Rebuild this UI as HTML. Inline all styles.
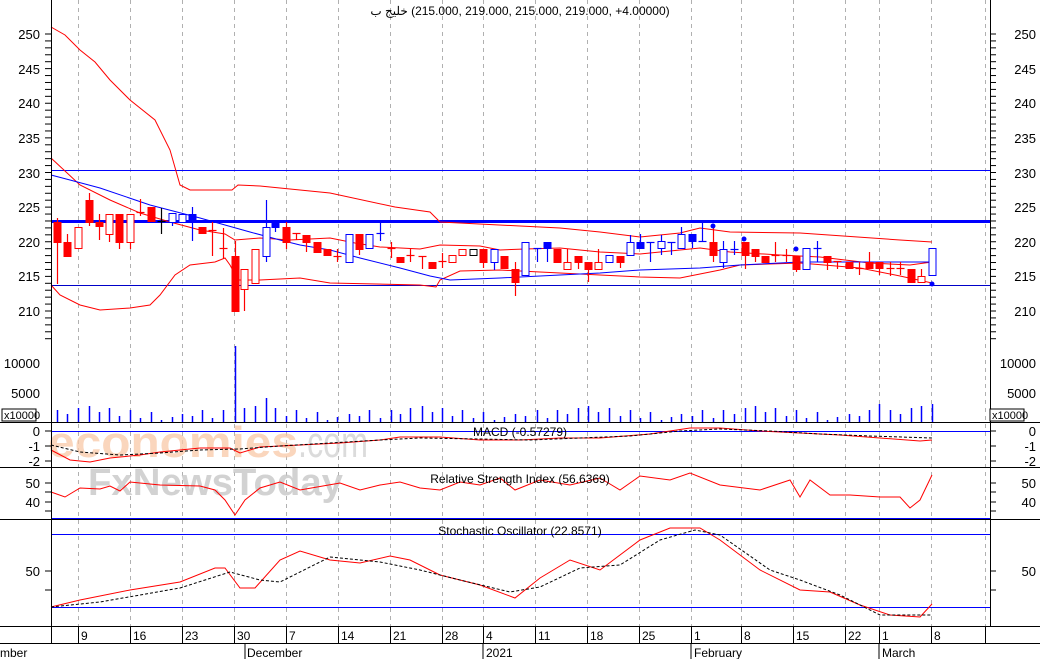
<!DOCTYPE html>
<html><head><meta charset="utf-8"><style>
html,body{margin:0;padding:0;background:#fff;}
svg{display:block;font-family:"Liberation Sans","Noto Sans CJK SC",sans-serif;}
</style></head><body>
<svg id="c" width="1040" height="659" viewBox="0 0 1040 659" xmlns="http://www.w3.org/2000/svg">
<rect width="1040" height="659" fill="#fff"/>
<g id="grid" stroke="#b0b0b0" stroke-dasharray="4,4" stroke-width="1"></g>
<text x="48" y="457" font-size="44" fill="#f9c9a8" opacity="0.75" font-weight="bold" textLength="250" lengthAdjust="spacingAndGlyphs">economies</text>
<text x="298" y="457" font-size="44" fill="#d0d0d0" opacity="0.75" textLength="70" lengthAdjust="spacingAndGlyphs">.com</text>
<text x="88" y="495" font-size="38" fill="#c8c8c8" opacity="0.8" font-weight="bold" textLength="255" lengthAdjust="spacingAndGlyphs">FxNewsToday</text>
<line x1="51" y1="170.5" x2="990" y2="170.5" stroke="#0000ff" stroke-width="1"/>
<line x1="51" y1="221.5" x2="990" y2="221.5" stroke="#0000ff" stroke-width="3"/>
<line x1="51" y1="285.5" x2="990" y2="285.5" stroke="#0000c8" stroke-width="1"/>
<g fill="none" stroke-width="1">
<polyline stroke="#f00" points="51,27 65,35 80,50 95,62 110,80 130,100 155,120 170,150 180,185 190,190 232,190 238,185 260,186 330,193 395,207 430,212 440,222 520,226 560,228 600,232 640,237 680,233 700,228 730,232 800,233 900,240 932,242"/>
<polyline stroke="#f00" points="51,158 80,185 110,200 140,213 170,222 200,230 225,234 235,240 260,238 290,240 330,238 355,243 380,247 420,249 440,245 480,246 500,250 525,249 560,248 600,252 640,254 700,248 730,252 780,255 820,257 870,263 910,265 932,262"/>
<polyline stroke="#f00" points="51,285 60,295 80,305 100,310 130,308 150,305 160,295 175,275 190,265 215,262 225,258 230,265 238,280 260,280 300,278 330,283 420,285 436,287 440,280 460,271 500,270 540,272 600,275 640,277 680,278 700,274 720,270 740,265 800,263 860,268 900,276 932,283"/>
<polyline stroke="#00f" points="51,175 70,180 100,188 150,205 200,218 250,232 280,240 300,245 330,250 360,258 400,268 430,276 450,280 500,278 560,275 600,273 640,270 700,268 740,265 800,262 870,262 932,262"/>
</g>
<g id="cand"></g>
<g fill="#00f"><circle cx="713" cy="226" r="2.5"/><circle cx="744" cy="239" r="2.5"/><circle cx="796" cy="249" r="2.5"/><circle cx="932" cy="284" r="2.5"/></g>
<g id="vol" stroke="#00f" stroke-width="1.5"></g>
<line x1="51" y1="431.5" x2="990" y2="431.5" stroke="#00f"/>
<polyline fill="none" stroke="#f00" points="51,450 70,460 90,462 110,458 140,455 160,452 200,448 230,448 240,453 260,447 300,445 340,443 380,440 400,437 440,437 480,440 520,440 560,438 600,438 650,434 690,428 720,428 760,431 800,433 840,435 880,438 920,441 932,440"/>
<polyline fill="none" stroke="#000" stroke-dasharray="3,2" points="51,445 80,452 120,455 160,453 200,450 240,449 280,446 330,443 380,440 420,438 480,439 530,440 580,438 630,436 680,431 720,429 770,431 820,434 870,436 932,438"/>
<polyline fill="none" stroke="#f00" points="51,492 65,497 80,488 100,489 110,486 120,491 130,482 160,485 200,486 215,490 225,500 235,515 245,500 260,488 280,482 300,490 340,483 360,490 380,485 400,482 420,488 440,490 460,482 480,485 500,478 515,490 540,480 570,485 600,478 620,490 640,476 670,480 690,473 720,485 760,490 790,480 800,497 810,480 830,495 850,495 880,497 900,497 910,508 920,500 932,475"/>
<line x1="51" y1="518.5" x2="990" y2="518.5" stroke="#00f"/>
<line x1="51" y1="534.5" x2="990" y2="534.5" stroke="#00f"/>
<line x1="51" y1="607.5" x2="990" y2="607.5" stroke="#00f"/>
<polyline fill="none" stroke="#f00" points="51,607 80,600 130,590 180,582 215,568 225,568 240,588 255,588 280,560 300,551 330,560 360,563 390,556 410,560 440,575 480,585 515,598 540,578 570,560 600,570 640,540 670,528 700,528 720,540 760,570 800,590 830,592 860,605 890,615 920,617 932,604"/>
<polyline fill="none" stroke="#000" stroke-dasharray="3,2" points="51,607 100,602 180,588 230,572 260,580 280,582 330,557 380,562 420,570 460,580 510,592 540,587 580,568 620,565 660,540 695,530 720,535 770,570 800,580 840,595 880,615 932,615"/>
<g stroke="#000" stroke-width="1">
<line x1="51.5" y1="0" x2="51.5" y2="643"/>
<line x1="990.5" y1="0" x2="990.5" y2="626"/>
<line x1="0" y1="422.5" x2="1040" y2="422.5"/>
<line x1="0" y1="467.5" x2="1040" y2="467.5"/>
<line x1="0" y1="519.5" x2="1040" y2="519.5"/>
<line x1="0" y1="626.5" x2="1040" y2="626.5"/>
<line x1="0" y1="643.5" x2="1040" y2="643.5"/>
</g>
<g id="ticks" stroke="#000"></g>
<g font-size="13" fill="#000">
<text x="520" y="15" font-size="12" text-anchor="middle" direction="ltr" style="direction:ltr;unicode-bidi:embed">&#x200E;<tspan>خليج ب</tspan>&#x200E; (215.000, 219.000, 215.000, 219.000, +4.00000)</text>
<g text-anchor="end">
<text x="40" y="39">250</text><text x="40" y="74">245</text><text x="40" y="108">240</text><text x="40" y="143">235</text><text x="40" y="178">230</text><text x="40" y="212">225</text><text x="40" y="247">220</text><text x="40" y="281">215</text><text x="40" y="316">210</text>
<text x="40" y="368">10000</text><text x="40" y="398">5000</text>
<text x="40" y="436">0</text><text x="40" y="451">-1</text><text x="40" y="466">-2</text>
<text x="40" y="488">50</text><text x="40" y="507">40</text><text x="40" y="576">50</text>
<text x="1036" y="39">250</text><text x="1036" y="74">245</text><text x="1036" y="108">240</text><text x="1036" y="143">235</text><text x="1036" y="178">230</text><text x="1036" y="212">225</text><text x="1036" y="247">220</text><text x="1036" y="281">215</text><text x="1036" y="316">210</text>
<text x="1036" y="368">10000</text><text x="1036" y="398">5000</text>
<text x="1036" y="436">0</text><text x="1036" y="451">-1</text><text x="1036" y="466">-2</text>
<text x="1036" y="488">50</text><text x="1036" y="507">40</text><text x="1036" y="576">50</text>
</g>
<text x="520" y="436" text-anchor="middle" font-size="12">MACD (-0.57279)</text>
<text x="520" y="483" text-anchor="middle" font-size="12">Relative Strength Index (56.6369)</text>
<text x="520" y="535" text-anchor="middle" font-size="12">Stochastic Oscillator (22.8571)</text>
<rect x="2" y="409" width="34" height="12" fill="#fff" stroke="#000"/>
<text x="4" y="419" font-size="11">x10000</text>
<rect x="990" y="409" width="34" height="12" fill="#fff" stroke="#000"/>
<text x="992" y="419" font-size="11">x10000</text>
<g id="dl"></g>
<text x="0" y="657" font-size="12">mber</text>
<text x="247" y="657" font-size="12">December</text>
<text x="486" y="657" font-size="12">2021</text>
<text x="694" y="657" font-size="12">February</text>
<text x="882" y="657" font-size="12">March</text>
</g>
<g stroke="#000"><line x1="245" y1="643" x2="245" y2="659"/><line x1="483" y1="643" x2="483" y2="659"/><line x1="691" y1="643" x2="691" y2="659"/><line x1="879" y1="643" x2="879" y2="659"/></g>
</svg>
<script>
var NS="http://www.w3.org/2000/svg";
function el(p,t,a){var e=document.createElementNS(NS,t);for(var k in a)e.setAttribute(k,a[k]);p.appendChild(e);return e;}
var wk=[[78,"9"],[130,"16"],[182,"23"],[234,"30"],[286,"7"],[338,"14"],[390,"21"],[442,"28"],[483,"4"],[535,"11"],[587,"18"],[639,"25"],[691,"1"],[741,"8"],[793,"15"],[845,"22"],[879,"1"],[931,"8"],[985,""]];
var g=document.getElementById("grid"),dl=document.getElementById("dl"),tk=document.getElementById("ticks");
wk.forEach(function(w){el(g,"line",{x1:w[0]+.5,y1:0,x2:w[0]+.5,y2:626});
el(tk,"line",{x1:w[0]+.5,y1:626,x2:w[0]+.5,y2:643});
var t=el(dl,"text",{x:w[0]+3,y:640,"font-size":"12"});t.textContent=w[1];});
for(var y=34;y<=345;y+=6.925){el(tk,"line",{x1:45,y1:y,x2:51,y2:y});el(tk,"line",{x1:990,y1:y,x2:996,y2:y});}
[431,446,461,483,492,502,511,571,590].forEach(function(y){el(tk,"line",{x1:45,y1:y,x2:51,y2:y});el(tk,"line",{x1:990,y1:y,x2:996,y2:y});});
var R="#f00",B="#00f",K="#000";
var C=[[57,222,242,218,284,R,1],[67,242,256,234,256,R,1],[78,227,248,227,248,R,0],[89,200,222,193,226,R,1],[99,222,226,214,240,R,1],[109,214,234,214,242,R,0],[119,214,242,214,249,R,1],[130,214,242,214,249,R,0],[140,212,212,199,216,R,0],[151,207,221,207,221,R,1],[161,221,221,208,234,K,0],[172,213,222,213,226,B,0],[182,214,222,214,222,B,0],[192,214,222,207,241,B,1],[202,227,233,227,233,R,1],[212,230,230,222,256,R,0],[223,248,248,228,259,R,0],[235,256,311,241,311,R,1],[244,269,289,269,311,R,0],[255,249,283,249,283,R,0],[266,227,256,200,262,B,0],[275,222,227,222,232,B,1],[286,227,242,222,249,R,1],[296,233,233,233,240,R,0],[306,235,242,235,252,R,1],[317,242,252,242,252,R,1],[327,249,255,249,256,R,1],[337,256,256,249,262,R,0],
[349,234,262,234,262,B,0],[359,234,249,234,255,R,1],[369,234,248,234,248,B,0],[380,233,233,223,241,B,0],[391,248,248,242,258,R,0],[400,257,262,257,262,R,1],[410,255,255,248,262,R,0],[422,256,256,256,269,R,0],[432,262,268,262,268,R,1],[442,261,261,253,268,R,0],[452,255,262,255,262,R,0],[462,249,255,249,255,R,0],[473,249,255,249,255,K,0],[483,249,262,249,268,R,1],[494,249,262,249,270,B,0],[504,256,268,256,268,R,1],[515,269,282,262,296,R,1],[525,242,275,242,275,B,0],[537,248,248,248,262,B,0],[547,242,248,242,262,B,1],[557,249,262,249,262,R,1],[567,262,269,249,269,R,0],[578,256,262,256,269,R,1],[588,262,269,262,282,R,1],[598,262,269,249,269,R,0],[609,255,262,255,262,B,0],[620,256,262,256,268,R,1],[630,242,255,235,255,B,0],[640,242,248,234,248,B,1],
[650,242,242,242,262,B,0],[661,241,248,235,255,B,0],[671,242,242,242,255,B,0],[681,234,248,227,248,B,0],[692,234,241,234,248,B,1],[702,241,241,223,241,B,0],[713,242,255,225,262,R,1],[723,249,262,241,268,B,0],[734,249,249,241,255,B,0],[745,242,255,242,269,R,1],[755,249,256,249,262,R,1],[765,256,262,256,262,R,1],[775,255,255,242,262,R,0],[786,255,255,249,262,R,0],[796,256,269,256,272,R,1],[806,248,269,248,269,B,0],[817,248,248,241,262,B,0],[827,256,262,256,270,R,1],[837,261,261,261,269,R,0],[849,262,268,262,268,R,1],[859,268,268,262,275,R,0],[869,262,268,252,268,R,1],[879,262,268,262,275,R,1],[890,268,268,262,276,R,0],[900,268,268,262,275,R,0],[911,269,282,269,282,R,1],[921,276,282,269,282,R,0],[932,248,275,248,275,B,0]];
var cg=document.getElementById("cand");
C.forEach(function(c){var x=c[0]+.5;
el(cg,"line",{x1:x,y1:c[3],x2:x,y2:c[4],stroke:c[5],"stroke-width":1.2});
if(c[2]-c[1]<1){el(cg,"line",{x1:x-4,y1:c[1]+.5,x2:x+4,y2:c[1]+.5,stroke:c[5],"stroke-width":1.2});}
else el(cg,"rect",{x:x-3.5,y:c[1]+.5,width:7,height:c[2]-c[1],fill:c[6]?c[5]:"#fff",stroke:c[5],"stroke-width":1});
});
var vg=document.getElementById("vol");
C.forEach(function(c,i){var h=[12,8,14,16,10,14,6,12,4,10,2,5,8,6,12,4][i%16];
if(c[0]==235)h=76;if(c[0]==266)h=24;if(c[0]==370)h=16;if(c[0]==932)h=18;if(c[0]==879)h=18;
el(vg,"line",{x1:c[0]+.5,y1:422-h,x2:c[0]+.5,y2:422});});
</script>
</body></html>
